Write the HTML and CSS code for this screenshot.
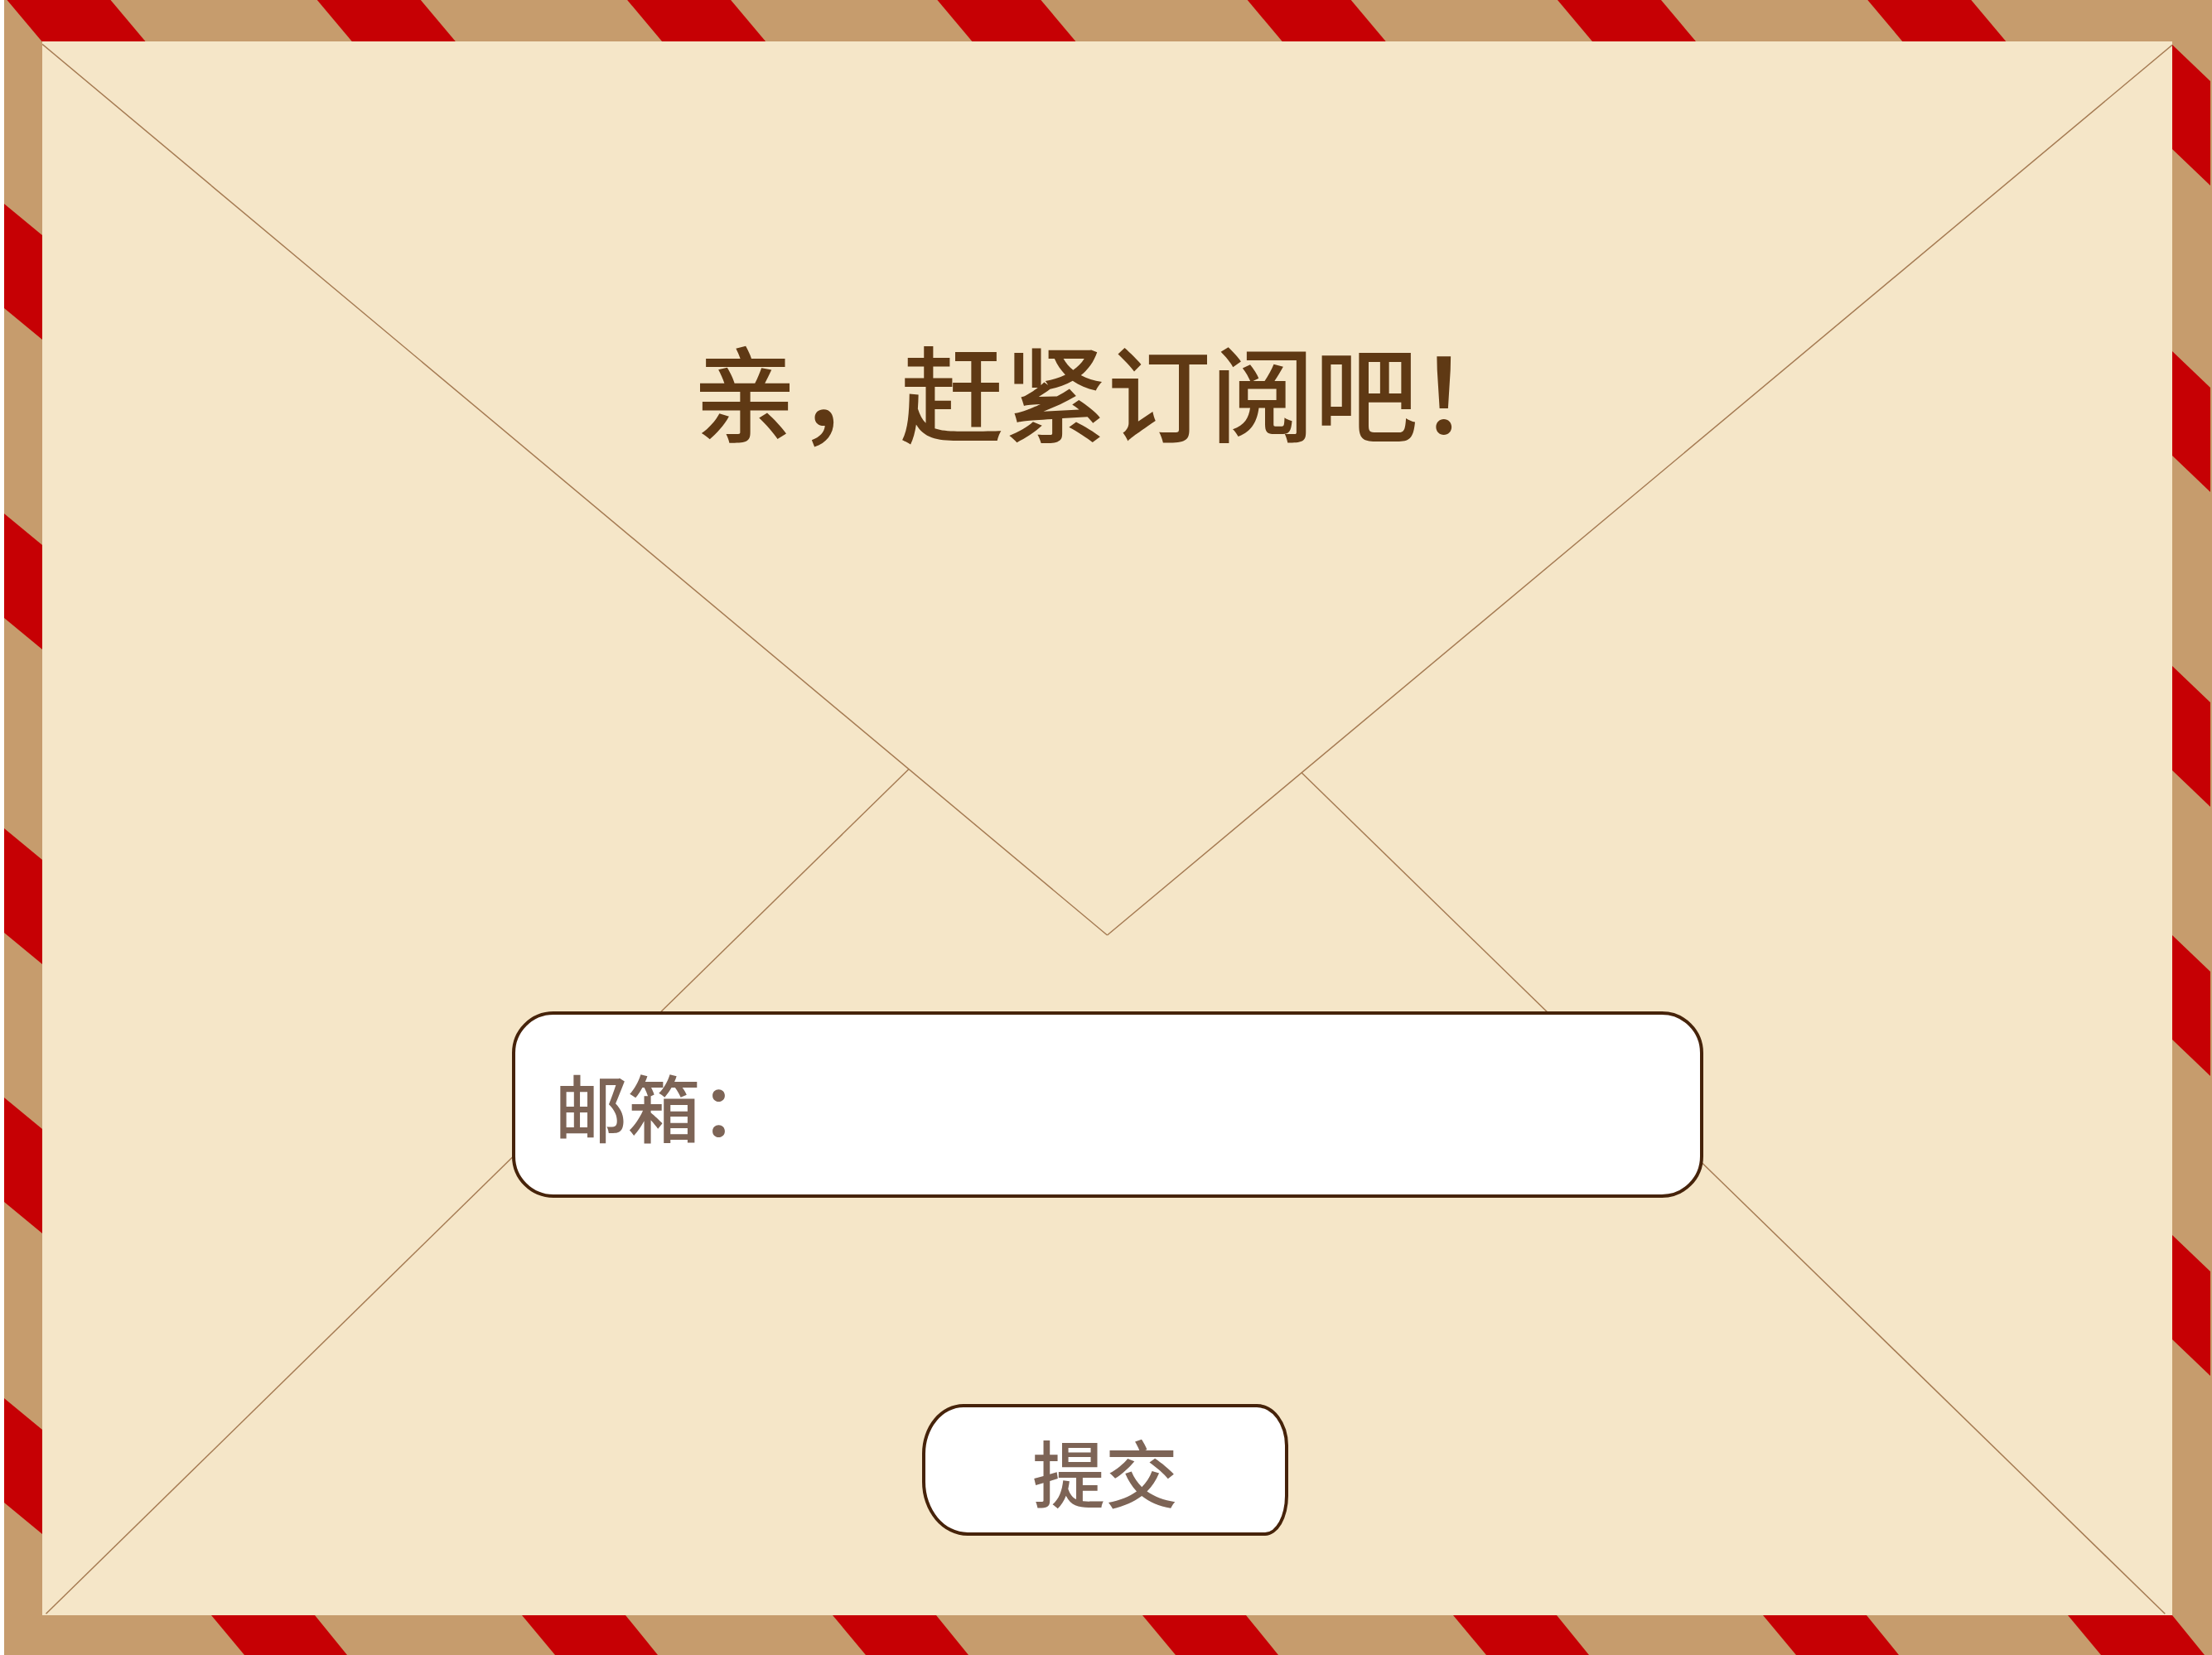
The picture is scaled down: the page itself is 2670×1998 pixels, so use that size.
FILE: index.html
```html
<!DOCTYPE html>
<html lang="zh-CN">
<head>
<meta charset="utf-8">
<title>订阅</title>
<link rel="stylesheet" href="styles.css">
</head>
<body>
<div class="envelope">
  <svg class="stripes" viewBox="0 0 2665 1998" preserveAspectRatio="none" aria-hidden="true">
    <g class="stripe">
      <polygon points="3.5,0 128.5,0 170.5,50 45.5,50"/>
      <polygon points="377.8,0 502.8,0 544.8,50 419.8,50"/>
      <polygon points="752.1,0 877.1,0 919.1,50 794.1,50"/>
      <polygon points="1126.4,0 1251.4,0 1293.4,50 1168.4,50"/>
      <polygon points="1500.7,0 1625.7,0 1667.7,50 1542.7,50"/>
      <polygon points="1875,0 2000,0 2042,50 1917,50"/>
      <polygon points="2249.3,0 2374.3,0 2416.3,50 2291.3,50"/>

      <polygon points="250,1950 375,1950 414,1998 290,1998"/>
      <polygon points="625,1950 750,1950 789,1998 665,1998"/>
      <polygon points="1000,1950 1125,1950 1164,1998 1040,1998"/>
      <polygon points="1374,1950 1499,1950 1538,1998 1414,1998"/>
      <polygon points="1749,1950 1874,1950 1913,1998 1789,1998"/>
      <polygon points="2123,1950 2248,1950 2287,1998 2163,1998"/>
      <polygon points="2491,1950 2617,1950 2656,1998 2531,1998"/>

      <polygon points="0,246 46,284 46,410 0,372"/>
      <polygon points="0,620 46,658 46,784 0,746"/>
      <polygon points="0,1000 46,1038 46,1164 0,1126"/>
      <polygon points="0,1325 46,1363 46,1489 0,1451"/>
      <polygon points="0,1688 46,1726 46,1852 0,1814"/>

      <polygon points="2617,54 2663,98 2663,224 2617,180"/>
      <polygon points="2617,424 2663,468 2663,594 2617,550"/>
      <polygon points="2617,804 2663,848 2663,974 2617,930"/>
      <polygon points="2617,1129 2663,1173 2663,1299 2617,1255"/>
      <polygon points="2617,1491 2663,1535 2663,1661 2617,1617"/>
    </g>
  </svg>
  <main class="letter">
    <svg class="flaps" viewBox="0 0 2571 1900" preserveAspectRatio="none" aria-hidden="true">
      <g class="flap-line">
        <line x1="0" y1="3.3" x2="1285.5" y2="1079"/>
        <line x1="2571" y1="4.3" x2="1285.5" y2="1079"/>
        <line x1="4.5" y1="1898.3" x2="1046" y2="878.5"/>
        <line x1="2562.3" y1="1898.3" x2="1520" y2="882.8"/>
      </g>
    </svg>
    <h1 class="title">亲，赶紧订阅吧！</h1>
    <form class="subscribe">
      <label class="field">
        <span class="field-label">邮箱：</span>
        <input class="field-input" type="email" name="email">
      </label>
      <button class="submit" type="submit">提交</button>
    </form>
  </main>
</div>
</body>
</html>
```

FILE: styles.css
```css
html, body {
  margin: 0;
  padding: 0;
  background: #ffffff;
}

body {
  font-family: "Noto Sans CJK SC", "Noto Sans", sans-serif;
}

.envelope {
  position: relative;
  box-sizing: border-box;
  margin-left: 5px;
  width: 2665px;
  height: 1998px;
  padding: 50px 48px 48px 46px;
  background: #c69c6d;
}

.stripes {
  position: absolute;
  left: 0;
  top: 0;
  width: 100%;
  height: 100%;
}

.stripe polygon {
  fill: #c60004;
}

.letter {
  position: relative;
  height: 100%;
  background: #f5e6c8;
  display: flex;
  flex-direction: column;
  align-items: center;
}

.flaps {
  position: absolute;
  left: 0;
  top: 0;
  width: 100%;
  height: 100%;
}

.flap-line line {
  stroke: #a57b53;
  stroke-width: 1.5;
}

.title {
  position: relative;
  margin: 357px 0 0 0;
  font-size: 125px;
  line-height: 1;
  font-weight: 500;
  color: #5f3914;
  white-space: nowrap;
}

.subscribe {
  position: relative;
  margin-top: 689px;
  display: flex;
  flex-direction: column;
  align-items: center;
  gap: 249px;
}

.field {
  box-sizing: border-box;
  width: 1438px;
  height: 225px;
  display: flex;
  align-items: center;
  padding-left: 48px;
  border: 4px solid #46230a;
  border-radius: 50px;
  background: #ffffff;
}

.field-label {
  font-size: 88px;
  line-height: 1;
  font-weight: 500;
  color: #7d6456;
  white-space: nowrap;
}

.field-input {
  flex: 1;
  height: 100%;
  border: none;
  outline: none;
  background: transparent;
  font: inherit;
  font-size: 60px;
  color: #46230a;
}

.submit {
  box-sizing: border-box;
  width: 442px;
  height: 159px;
  margin-right: 5px;
  padding: 0;
  border: 4px solid #46230a;
  border-radius: 50px 38px 28px 55px / 60px 50px 48px 65px;
  background: #ffffff;
  font-family: inherit;
  font-size: 88px;
  font-weight: 500;
  line-height: 1;
  color: #7d6456;
  cursor: pointer;
}
```
